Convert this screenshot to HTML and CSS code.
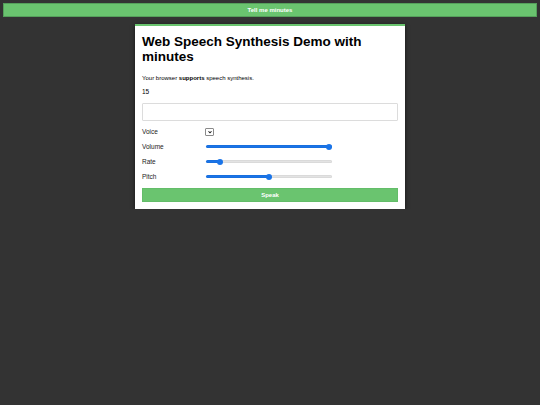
FILE: index.html
```html
<!DOCTYPE html>
<html lang="en">
<head>
<meta charset="utf-8">
<title>Web Speech Synthesis Demo with minutes</title>
<link rel="stylesheet" href="styles.css">
</head>
<body>
<button class="topbar" type="button">Tell me minutes</button>
<main class="card">
  <h1 class="title">Web Speech Synthesis Demo with minutes</h1>
  <p class="support">Your browser <strong>supports</strong> speech synthesis.</p>
  <p class="minutes">15</p>
  <input class="text-input" type="text" aria-label="Text to speak">
  <div class="controls">
    <label class="label" for="voice">Voice</label>
    <div class="select-wrap">
      <select id="voice" class="voice-select"></select>
      <svg class="chevron" viewBox="0 0 8 8" aria-hidden="true"><path d="M2 3 L4 5 L6 3" fill="none" stroke="#222" stroke-width="1.4"/></svg>
    </div>
    <label class="label" for="volume">Volume</label>
    <input id="volume" class="slider" type="range" min="0" max="1" step="0.1" value="1" style="--fill: 100%">
    <label class="label" for="rate">Rate</label>
    <input id="rate" class="slider" type="range" min="0.1" max="10" step="0.1" value="1" style="--fill: 11%">
    <label class="label" for="pitch">Pitch</label>
    <input id="pitch" class="slider" type="range" min="0" max="2" step="0.1" value="1" style="--fill: 50%">
  </div>
  <button class="speak" type="button">Speak</button>
</main>
</body>
</html>
```

FILE: styles.css
```css
html, body {
  margin: 0;
  padding: 0;
}

body {
  background: #333333;
  font-family: "Liberation Sans", Arial, sans-serif;
  color: #000;
}

.topbar {
  display: block;
  box-sizing: border-box;
  width: calc(100% - 6px);
  height: 14px;
  margin: 3px 3px 0;
  padding: 0;
  background: #6ac46f;
  border: 1px solid #55a05b;
  color: #fff;
  font-family: "Liberation Sans", Arial, sans-serif;
  font-weight: bold;
  font-size: 6px;
  line-height: 12px;
  text-align: center;
}

.card {
  box-sizing: border-box;
  width: 270px;
  margin: 7px auto 0;
  padding: 8px 7px 7px;
  background: #fff;
  border-top: 2px solid #6ac46f;
  box-shadow: 0 1px 4px rgba(0, 0, 0, 0.6);
  display: flex;
  flex-direction: column;
}

.title {
  margin: 0;
  font-size: 13.5px;
  line-height: 15px;
  font-weight: bold;
  color: #000;
}

.support {
  margin: 11px 0 0;
  font-size: 6px;
  line-height: 7px;
}

.minutes {
  margin: 6px 0 0;
  font-size: 6.5px;
  line-height: 8px;
}

.text-input {
  box-sizing: border-box;
  display: block;
  width: 100%;
  height: 18px;
  margin: 7px 0 0;
  padding: 0 4px;
  border: 1px solid #dcdcdc;
  border-radius: 1px;
  background: #fff;
  font-size: 6.5px;
}

.controls {
  display: grid;
  grid-template-columns: 64px 1fr;
  grid-auto-rows: 15px;
  align-items: center;
  margin-top: 3px;
}

.label {
  font-size: 6.5px;
  line-height: 8px;
  color: #222;
}

.select-wrap {
  position: relative;
  width: 9px;
  height: 8px;
  margin-left: -1px;
}

.voice-select {
  -webkit-appearance: none;
  appearance: none;
  display: block;
  box-sizing: border-box;
  width: 9px;
  height: 8px;
  margin: 0;
  padding: 0;
  border: 1px solid #8a8a8a;
  border-radius: 1px;
  background: #fff;
}

.chevron {
  position: absolute;
  left: 1.5px;
  top: 1px;
  width: 6px;
  height: 6px;
  pointer-events: none;
}

.slider {
  -webkit-appearance: none;
  appearance: none;
  display: block;
  width: 126px;
  height: 6px;
  margin: 0;
  padding: 0;
  background: transparent;
}

.slider::-webkit-slider-runnable-track {
  height: 3px;
  border-radius: 2px;
  background: linear-gradient(to right, #1a74e8 var(--fill), #e3e3e3 var(--fill));
  box-shadow: inset 0 0 0 0.5px rgba(0, 0, 0, 0.08);
}

.slider::-webkit-slider-thumb {
  -webkit-appearance: none;
  appearance: none;
  width: 6px;
  height: 6px;
  margin-top: -1.5px;
  border-radius: 50%;
  background: #1a74e8;
  border: none;
}

.speak {
  display: block;
  box-sizing: border-box;
  width: 100%;
  height: 14px;
  margin: 4px 0 0;
  padding: 0;
  background: #6ac46f;
  border: 1px solid #63bd69;
  color: #fff;
  font-family: "Liberation Sans", Arial, sans-serif;
  font-weight: bold;
  font-size: 6px;
  line-height: 12px;
  text-align: center;
}
```
